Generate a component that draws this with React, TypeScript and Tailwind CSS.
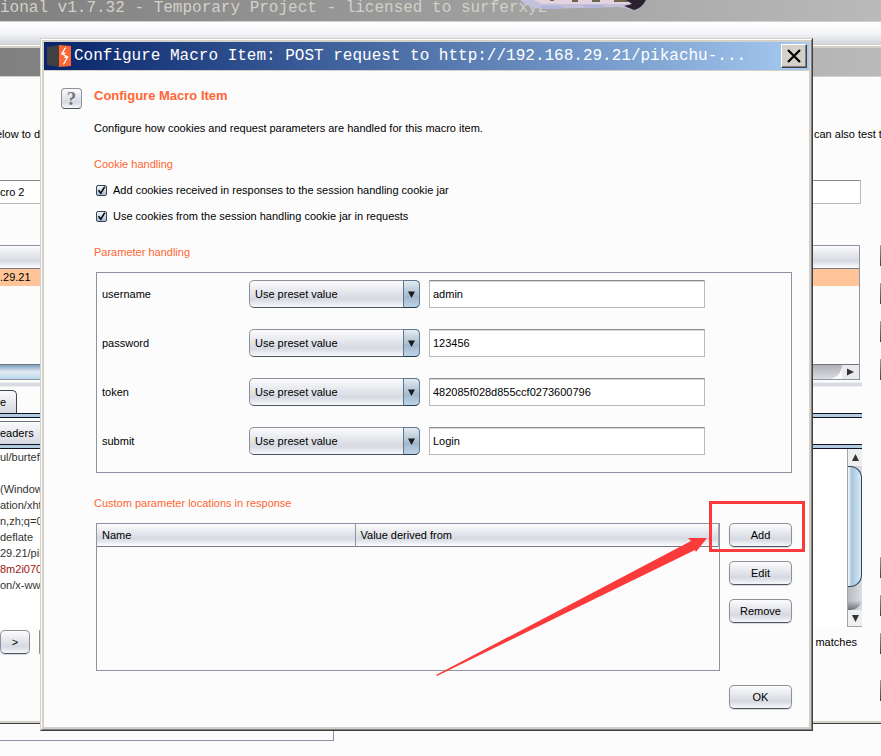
import { useState } from 'react';

const PARAMS = [
  { name: 'username', value: 'admin' },
  { name: 'password', value: '123456' },
  { name: 'token', value: '482085f028d855ccf0273600796' },
  { name: 'submit', value: 'Login' },
];

const COOKIE_OPTIONS = [
  'Add cookies received in responses to the session handling cookie jar',
  'Use cookies from the session handling cookie jar in requests',
];

const MODES = ['Use preset value', 'Derive from prior response'];

const REQUEST_LINES = [
  'ul/burtefor',
  '',
  '(Windows',
  'ation/xhtml',
  'n,zh;q=0.8',
  'deflate',
  '29.21/pika',
  '8m2i070c',
  'on/x-www',
];

const metal = 'bg-linear-to-b from-[#fcfcfd] via-[#d6d9e1] via-70% to-[#f6f8fb]';

const caption = "font-['Liberation_Mono',monospace] text-[16px]";

function PushButton({ label }: { label: string }) {
  return (
    <button
      type="button"
      className={`h-6 w-full rounded-[5px] border border-[#8d9096] border-b-[#4c535c] shadow-[0_1px_1px_#d5d7dc] ${metal}`}
    >
      {label}
    </button>
  );
}

function SectionTitle({ children }: { children: string }) {
  return <h2 className="text-[#ff6633]">{children}</h2>;
}

function CheckRow({ label }: { label: string }) {
  const [on, setOn] = useState(true);
  return (
    <label className="flex items-center gap-1.5 pl-0.5">
      <span className="grid">
        <input
          type="checkbox"
          checked={on}
          onChange={() => setOn(!on)}
          className="col-start-1 row-start-1 size-[11px] appearance-none rounded-[2px] border border-[#33455a] bg-linear-to-b from-[#f3f7fb] to-[#a9bfd3]"
        />
        {on && (
          <svg viewBox="0 0 11 11" className="pointer-events-none col-start-1 row-start-1 size-[11px]">
            <path d="M2.5 5.2 L4.8 8.2 L8.8 1.6" fill="none" stroke="#111" strokeWidth="1.7" />
          </svg>
        )}
      </span>
      {label}
    </label>
  );
}

function ParamRow({ name, value }: { name: string; value: string }) {
  return (
    <div className="flex h-7 items-center">
      <label htmlFor={name} className="w-[147px] shrink-0">
        {name}
      </label>
      <div className="relative mr-[9px] h-7 w-[171px] shrink-0">
        <select
          aria-label={`${name} mode`}
          className={`size-full appearance-none rounded-[5px] border border-[#8d9096] border-b-[#4c535c] pl-[5px] ${metal}`}
        >
          {MODES.map((m) => (
            <option key={m}>{m}</option>
          ))}
        </select>
        <span className="pointer-events-none absolute inset-y-0 right-0 flex w-[17px] items-center justify-center rounded-r-[5px] border border-[#5d7790] border-b-[#27394d] bg-linear-to-b from-[#e3ecf3] via-[#a3b8cc] via-60% to-[#bdd4e8]">
          <svg viewBox="0 0 7 7" className="size-[7px]">
            <path d="M0 0.5 H7 L3.5 7 Z" fill="#1a1a1a" />
          </svg>
        </span>
      </div>
      <input
        id={name}
        defaultValue={value}
        className="h-7 min-w-0 flex-1 border border-[#b9b9bc] border-t-[#8c8c90] bg-white pl-[3px] shadow-[inset_0_1px_0_#d8d8da]"
      />
    </div>
  );
}

function MacroDialog() {
  return (
    <div
      role="dialog"
      aria-label="Configure Macro Item"
      className="absolute top-[38px] right-[68px] left-10 border border-[#d4d0c8] border-r-[#404040] border-b-[#404040]"
    >
      <div className="border border-white border-r-[#808080] border-b-[#808080] bg-[#d4d0c8] p-0.5">
        <header className="flex h-7 items-center bg-linear-to-r from-[#0a246a] to-[#a6caf0] pr-0.5 pl-[3px]">
          <svg viewBox="0 0 24 22" className="h-[22px] w-6 shrink-0">
            <path d="M0 2 L12 0 V22 L0 20 Z" fill="#404042" />
            <path d="M12 0 L24 1 V21 L12 22 Z" fill="#ff6633" />
            <path
              d="M18.6 2.5 L14.8 8.8 L20.6 12 L16.4 19.5 M15.2 8.6 L18.4 8.2 M20.6 12 L17.2 12.4"
              fill="none"
              stroke="#fff"
              strokeWidth="1.3"
            />
          </svg>
          <h1 className={`ml-[3px] min-w-0 flex-1 leading-7 whitespace-pre text-white ${caption}`}>
            Configure Macro Item: POST request to http://192.168.29.21/pikachu-...
          </h1>
          <button
            type="button"
            aria-label="Close"
            className="flex h-6 w-[26px] shrink-0 items-center justify-center border border-white border-r-[#404040] border-b-[#404040] bg-[#d4d0c8] shadow-[inset_-1px_-1px_0_#808080]"
          >
            <svg viewBox="0 0 14 14" className="size-3.5">
              <path d="M1 1 L13 13 M13 1 L1 13" stroke="#000" strokeWidth="2.2" />
            </svg>
          </button>
        </header>

        <div className="mt-px flex gap-3 bg-[#fcfcfc] px-[17px] pt-[17px] pb-[18px]">
          <button
            type="button"
            aria-label="Help"
            className={`size-[21px] shrink-0 rounded-[4px] border border-[#8d9096] border-b-[#4c535c] font-['Liberation_Serif',serif] text-[19px] leading-[19px] font-bold text-[#77797e] ${metal}`}
          >
            ?
          </button>
          <div className="min-w-0 flex-1">
            <h1 className="text-[13px] leading-4 font-bold text-[#ff6633]">Configure Macro Item</h1>
            <p className="mt-4">Configure how cookies and request parameters are handled for this macro item.</p>

            <div className="mt-5 flex flex-col gap-2.5">
              <SectionTitle>Cookie handling</SectionTitle>
              {COOKIE_OPTIONS.map((o) => (
                <CheckRow key={o} label={o} />
              ))}
            </div>

            <div className="mt-5">
              <SectionTitle>Parameter handling</SectionTitle>
              <div className="mt-3 ml-0.5 flex flex-col gap-[21px] border border-[#8f93a1] pt-[7px] pr-[86px] pb-[17px] pl-[5px]">
                {PARAMS.map((p) => (
                  <ParamRow key={p.name} name={p.name} value={p.value} />
                ))}
              </div>
            </div>

            <div className="mt-[22px]">
              <SectionTitle>Custom parameter locations in response</SectionTitle>
              <div className="mt-3 ml-0.5 flex gap-[9px]">
                <div className="h-[148px] flex-1 border border-[#8f93a1]">
                  <table className="w-full table-fixed border-collapse text-left">
                    <thead>
                      <tr className={`h-[22px] border-b border-[#747985] ${metal}`}>
                        <th className="w-[258px] border-r border-[#8f93a1] pl-[5px] font-normal">Name</th>
                        <th className="border-r border-[#a5a8b2] pl-[5px] font-normal">Value derived from</th>
                      </tr>
                    </thead>
                  </table>
                </div>
                <div className="flex w-[63px] flex-col gap-3.5">
                  <div className="relative">
                    <PushButton label="Add" />
                    {/* callout around the button, with its pointer */}
                    <span className="pointer-events-none absolute -top-[22px] -right-[13px] -bottom-[5px] -left-5 border-[3px] border-[#fb3b3b]" />
                    <svg
                      viewBox="0 0 272 142"
                      className="pointer-events-none absolute top-[13px] -left-[293px] h-[142px] w-[272px] max-w-none"
                    >
                      <path d="M0 139 L255 5 L252 2 L271 2 L260 16 L259 14 L1 140 Z" fill="#fb3b3b" />
                    </svg>
                  </div>
                  <PushButton label="Edit" />
                  <PushButton label="Remove" />
                </div>
              </div>
            </div>

            <div className="mt-3.5 ml-auto w-[63px]">
              <PushButton label="OK" />
            </div>
          </div>
        </div>
      </div>
    </div>
  );
}

function EdgeButtons({ labels }: { labels: string[] }) {
  return labels.map((l) => (
    <button key={l} type="button" aria-label={l} className="h-[21px] w-px bg-linear-to-b from-[#9a9c9f] to-[#3d4248]" />
  ));
}

function Band() {
  return <div className="h-[5px] border-y border-[#0c1422] bg-[#b3cbe0]" />;
}

function MacroEditor() {
  return (
    <div className="border-t border-[#d4d0c8]">
      <div className="border-t border-b border-white border-b-[#404040]">
        <div className="border-t-2 border-b-2 border-[#d4d0c8]">
          <div className="h-7 bg-linear-to-r from-[#808080] to-[#bababa]" />
          <div className="flex border-t border-[#d4d0c8] pb-5">
            <div className="min-w-0 flex-1 pt-[49px]">
              <div className="flex justify-between pr-0.5 whitespace-nowrap">
                <span className="-ml-1">elow to d</span>
                <span className="w-[46px]">can also test t</span>
              </div>
              <input
                aria-label="Macro description"
                defaultValue="cro 2"
                className="mt-[38px] block h-6 w-[calc(100%-1px)] border-t border-r border-b border-[#b9b9bc] border-t-[#8c8c90] bg-white"
              />
              <div className="mt-[41px] mr-0.5 h-[135px] border-t border-r border-b border-[#8f93a1]">
                <table className="w-full border-collapse text-left">
                  <tbody>
                    <tr className={`h-[22px] border-b border-[#747985] ${metal}`}>
                      <td />
                    </tr>
                    <tr className="h-[18px] bg-[#ffc599]">
                      <td className="leading-4">.29.21</td>
                    </tr>
                  </tbody>
                </table>
                <div className="mt-[78px] flex h-[15px] border-t border-[#6f7480]">
                  <div className="w-3/4 bg-linear-to-b from-[#7f9fbd] via-[#e4eef6] to-[#b4d8ec]" />
                  <div className="flex-1 rounded-br-[14px] bg-linear-to-b from-[#aeb0b6] to-[#dcdde2]" />
                  <div className="flex w-[17px] items-center justify-center bg-[#e9eaec]">
                    <svg viewBox="0 0 7 8" className="h-2 w-[7px]">
                      <path d="M0 0.5 L7 4 L0 7.5 Z" fill="#333" />
                    </svg>
                  </div>
                </div>
              </div>
              <div className="mt-0.5 h-[5px] border-y border-[#eceef1] bg-[#d8dbe2]" />
              <div className="mt-[3px] flex">
                <button
                  type="button"
                  className="h-[23px] w-[17px] rounded-tr-[5px] border-t border-r border-[#3f444c] bg-linear-to-b from-[#fbfbfc] to-[#d6d9e1] text-left"
                >
                  e
                </button>
              </div>
              <Band />
              <div className="mt-[3px] flex">
                <button
                  type="button"
                  className="h-[23px] w-14 border-t border-[#6f7480] bg-linear-to-b from-[#fbfbfc] to-[#d6d9e1] text-left"
                >
                  eaders
                </button>
              </div>
              <Band />
              <div className="flex h-[178px] bg-white">
                <pre className="flex-1 font-[inherit] text-[#333]">
                  {REQUEST_LINES.map((line, i) => (
                    <span key={i} className={i === 7 ? 'block h-4 text-[#a01515]' : 'block h-4'}>
                      {line}
                    </span>
                  ))}
                </pre>
                <div className="flex w-[15px] flex-col border-l border-[#a0a3aa] bg-linear-to-r from-[#b9bbc1] to-[#dcdde2]">
                  <div className="flex h-[17px] items-center justify-center bg-[#eeeff1]">
                    <svg viewBox="0 0 7 7" className="size-[7px]">
                      <path d="M0 7 H7 L3.5 0 Z" fill="#333" />
                    </svg>
                  </div>
                  <div className="h-[121px] rounded-r-[12px] border-y border-r border-[#2f4356] bg-linear-to-r from-[#f4f9fd] via-[#a9c4dc] via-30% to-[#d6ecf8]" />
                  <div className="flex-1 rounded-br-[12px] bg-linear-to-b from-transparent from-60% to-[#6d7076]" />
                  <div className="flex h-[17px] items-center justify-center border-b border-[#a0a3aa] bg-[#eeeff1]">
                    <svg viewBox="0 0 7 7" className="size-[7px]">
                      <path d="M0 0 H7 L3.5 7 Z" fill="#333" />
                    </svg>
                  </div>
                </div>
              </div>
              <div className="mt-[3px] flex items-center gap-[9px]">
                <div className="w-[30px]">
                  <PushButton label=">" />
                </div>
                <input aria-label="Search" className="h-6 w-[700px] min-w-0 border border-[#b9b9bc] border-l-[#8c8c90] bg-white" />
                <span className="ml-auto pr-[5px]">matches</span>
              </div>
            </div>
            <div className="ml-[18px] flex flex-col gap-[17px] pt-[168px]">
              <EdgeButtons labels={['Re-record macro', 'Configure item', 'Move up', 'Move down']} />
              <div className="h-[143px]" />
              <EdgeButtons labels={['Re-analyze macro', 'Test macro', 'Clear']} />
              <div className="-mt-2" />
              <EdgeButtons labels={['Confirm']} />
            </div>
          </div>
        </div>
      </div>
    </div>
  );
}

export default function App() {
  return (
    <div className="relative min-h-screen overflow-hidden bg-[#fcfcfc] font-['Liberation_Sans',Arial,sans-serif] text-[11px] leading-4 text-black">
      <header className="relative h-[22px] border-b border-[#d4d0c8] bg-linear-to-r from-[#808080] to-[#bababa]">
        <p className={`leading-4 whitespace-pre text-[#d4d0c8] ${caption}`}>
          ional v1.7.32 - Temporary Project - licensed to surferxyz
        </p>
        <svg viewBox="0 0 126 10" className="absolute top-0 left-[520px] h-2.5 w-[126px]">
          <path d="M0 0 H126 Q122 8 114 10 L100 7 L20 9 Q8 8 0 0 Z" fill="#c3c0dc" />
          <path d="M14 0 H110 V4 H22 Z" fill="#e4d3df" />
          <path d="M20 6 H44 L40 9 H22 Z M62 5 H84 L80 8 H66 Z" fill="#b2b4d8" />
          <path d="M30 0 h4 v1 h-4 Z M52 0 h6 v2 h-6 Z M72 0 h8 v2 h-8 Z M94 0 h14 v2 h-14 Z" fill="#69664f" />
          <path d="M106 0 H126 Q122 8 114 10 L104 6 L112 4 Z" fill="#2a2230" />
        </svg>
      </header>
      <div className="h-[22px] bg-linear-to-b from-white via-[#f4f5f8] to-[#d3d6de]" />
      <MacroEditor />
      <div className="h-[17px] w-[334px] border-r border-b border-[#8f93a1]" />
      <MacroDialog />
    </div>
  );
}
